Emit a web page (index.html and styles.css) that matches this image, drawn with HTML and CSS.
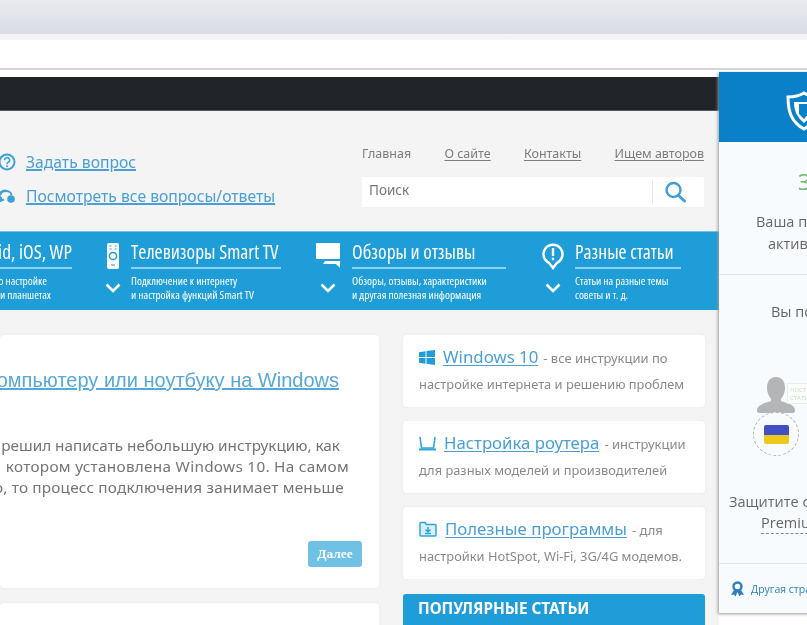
FILE: index.html
```html
<!DOCTYPE html>
<html lang="ru">
<head>
<meta charset="utf-8">
<title>Настройка</title>
<link rel="stylesheet" href="styles.css">
</head>
<body>
<div class="screen">
  <div class="browser-tabs"></div>
  <div class="browser-address"></div>
  <div class="page">
    <div class="darkbar"></div>
    <header class="site-head">
      <div class="ask">
        <a class="ask-row" href="#">
          <svg class="ask-icon" viewBox="0 0 18 18"><circle cx="9" cy="9" r="7.5" fill="none" stroke="#3f9fd6" stroke-width="2"/><path d="M6.6 7.2a2.5 2.5 0 1 1 3.6 2.2c-.8.4-1.2.9-1.2 1.8" fill="none" stroke="#3f9fd6" stroke-width="1.6"/><circle cx="9" cy="13.3" r="1" fill="#3f9fd6"/></svg>
          <span>Задать вопрос</span>
        </a>
        <a class="ask-row" href="#">
          <svg class="ask-icon" viewBox="0 0 18 18"><path d="M8 3.5c-3.6 0-6.5 2-6.5 4.6 0 1.3.7 2.4 1.8 3.2L2.5 14l3.6-1.6" fill="none" stroke="#3f9fd6" stroke-width="1.8"/><path d="M2.500 8a5.500 4 0 0 1 11 0" fill="none" stroke="#3f9fd6" stroke-width="1.8"/><circle cx="13" cy="12" r="3.800" fill="#3f9fd6"/></svg>
          <span>Посмотреть все вопросы/ответы</span>
        </a>
      </div>
      <div class="head-right">
        <nav class="top-links">
          <span class="top-plain">Главная</span>
          <a href="#">О сайте</a>
          <a href="#">Контакты</a>
          <a href="#">Ищем авторов</a>
        </nav>
        <div class="search">
          <span class="search-text">Поиск</span>
          <span class="search-btn">
            <svg width="24" height="24" viewBox="0 0 24 24"><circle cx="10.500" cy="10" r="7" fill="none" stroke="#3f9fd6" stroke-width="2.400"/><path d="M15.500 15.500l6 5.500" stroke="#3f9fd6" stroke-width="3" stroke-linecap="round"/></svg>
          </span>
        </div>
      </div>
    </header>

    <nav class="cats">
      <div class="cat cat-a">
        <div class="cat-text">
          <div class="cat-title">Android, iOS, WP</div>
          <div class="cat-sub"><span class="a1">Инструкции по настройке</span><span class="a2">смартфонов и планшетах</span></div>
        </div>
      </div>
      <div class="cat cat-b">
        <div class="cat-icon">
          <svg class="glyph" width="16" height="28" viewBox="0 0 16 28"><rect x="2" y="1" width="12" height="26" rx="2" fill="#fff"/><circle cx="8" cy="14" r="3.600" fill="none" stroke="#1f9dd9" stroke-width="1.500"/><path d="M4.500 4h2M9.500 4h2M4.500 7h2M9.500 7h2M6 23h4" stroke="#1f9dd9" stroke-width="1.200"/></svg>
          <svg class="chev" width="16" height="10" viewBox="0 0 16 10"><path d="M1.500 1.500L8 8l6.500-6.500" fill="none" stroke="#fff" stroke-width="2.600"/></svg>
        </div>
        <div class="cat-text">
          <div class="cat-title">Телевизоры Smart TV</div>
          <div class="cat-sub"><span>Подключение к интернету</span><span>и настройка функций Smart TV</span></div>
        </div>
      </div>
      <div class="cat cat-c">
        <div class="cat-icon">
          <svg class="glyph" width="26" height="28" viewBox="0 0 26 28"><path d="M2 1h22a1 1 0 0 1 1 1v14a1 1 0 0 1-1 1H2a1 1 0 0 1-1-1V2a1 1 0 0 1 1-1z" fill="#fff"/><path d="M10 19h15v7l-4-4H8z" fill="#fff"/></svg>
          <svg class="chev" width="16" height="10" viewBox="0 0 16 10"><path d="M1.500 1.500L8 8l6.500-6.500" fill="none" stroke="#fff" stroke-width="2.600"/></svg>
        </div>
        <div class="cat-text">
          <div class="cat-title">Обзоры и отзывы</div>
          <div class="cat-sub"><span>Обзоры, отзывы, характеристики</span><span>и другая полезная информация</span></div>
        </div>
      </div>
      <div class="cat cat-d">
        <div class="cat-icon">
          <svg class="glyph" width="22" height="28" viewBox="0 0 22 28"><path d="M11 26l-4-5.200A9.500 9.500 0 1 1 15 20.800z" fill="none" stroke="#fff" stroke-width="2.400"/><path d="M11 6v8" stroke="#fff" stroke-width="2.400"/><circle cx="11" cy="17" r="1.400" fill="#fff"/></svg>
          <svg class="chev" width="16" height="10" viewBox="0 0 16 10"><path d="M1.500 1.500L8 8l6.500-6.500" fill="none" stroke="#fff" stroke-width="2.600"/></svg>
        </div>
        <div class="cat-text">
          <div class="cat-title">Разные статьи</div>
          <div class="cat-sub"><span>Статьи на разные темы</span><span>советы и т. д.</span></div>
        </div>
      </div>
    </nav>

    <main class="main">
      <div class="col-left">
        <article class="post">
          <h2 class="post-title"><a href="#">Как подключить интернет к компьютеру или ноутбуку на Windows</a></h2>
          <div class="post-text">
            <div class="pl pl1">Давно решил написать небольшую инструкцию, как</div>
            <div class="pl pl2">на котором установлена Windows 10. На самом</div>
            <div class="pl pl3">Если просто, то процесс подключения занимает меньше</div>
          </div>
          <a class="more" href="#">Далее</a>
        </article>
        <article class="post post-next"></article>
      </div>
      <aside class="col-right">
        <div class="tip">
          <div class="tip-first">
            <svg class="tip-icon" width="16" height="15" viewBox="0 0 16 15"><path d="M0 2.200L6.500 1.200V7H0zM7.500 1L16 0v7H7.500zM0 8h6.500v5.800L0 12.800zM7.500 8H16v7l-8.500-1.200z" fill="#1f9dd9"/></svg>
            <a href="#">Windows 10</a> <span class="tip-rest">- все инструкции по</span>
          </div>
          <div class="tip-second">настройке интернета и решению проблем</div>
        </div>
        <div class="tip">
          <div class="tip-first">
            <svg class="tip-icon" width="17" height="15" viewBox="0 0 17 15"><path d="M1 1l1.500 11h12L16 1" fill="none" stroke="#2fa5dd" stroke-width="1.600"/><path d="M0 13.500h17" stroke="#2fa5dd" stroke-width="2"/></svg>
            <a href="#">Настройка роутера</a> <span class="tip-rest">- инструкции</span>
          </div>
          <div class="tip-second">для разных моделей и производителей</div>
        </div>
        <div class="tip">
          <div class="tip-first">
            <svg class="tip-icon" width="18" height="16" viewBox="0 0 18 16"><path d="M1 4V2.500a1 1 0 0 1 1-1h4l1.500 2H16a1 1 0 0 1 1 1V14a1 1 0 0 1-1 1H2a1 1 0 0 1-1-1z" fill="#d9f0fa" stroke="#2fa5dd" stroke-width="1.500"/><path d="M9 6v4M6.500 8.500L9 11l2.500-2.500M6 12.500h6" fill="none" stroke="#2fa5dd" stroke-width="1.500"/></svg>
            <a href="#">Полезные программы</a> <span class="tip-rest">- для</span>
          </div>
          <div class="tip-second">настройки HotSpot, Wi-Fi, 3G/4G модемов.</div>
        </div>
        <div class="popular">ПОПУЛЯРНЫЕ СТАТЬИ</div>
      </aside>
    </main>
  </div>

  <section class="vpn">
    <div class="vpn-head">
      <svg class="vpn-logo" width="36" height="40" viewBox="0 0 36 40"><path d="M18 2c5 3 10 4 16 4 0 14-3 25-16 32C5 31 2 20 2 6c6 0 11-1 16-4z" fill="none" stroke="#fff" stroke-width="3"/><path d="M8 11h20c0 9-3 15-10 21-7-6-10-12-10-21z" fill="#fff"/><path d="M13 13h9v10l-4 5-5-5z" fill="#0a80c8"/></svg>
    </div>
    <div class="vpn-status">
      <div class="vpn-green">Защита</div>
      <div class="vpn-line v-your">Ваша программа</div>
      <div class="vpn-line v-active">активна</div>
    </div>
    <div class="vpn-body">
      <div class="vpn-line v-you">Вы под защитой</div>
      <div class="vpn-map">
        <svg class="vpn-person" width="40" height="38" viewBox="0 0 40 38"><path d="M20 1c-6.500 0-9 5-9 11 0 5 2 8.500 4 10.500v2.500c-5 2-14 3-14 9.500 0 2 1 2.500 3 2.500h32c2 0 3-.5 3-2.500 0-6.500-9-7.500-14-9.500v-2.500c2-2 4-5.500 4-10.500 0-6-2.500-11-9-11z" fill="#b3b5b6"/></svg>
        <div class="vpn-tag">НОСТ<br>СТАТУ</div>
        <div class="vpn-flag-ring"><div class="vpn-flag"></div></div>
      </div>
      <div class="vpn-line v-protect">Защитите свой браузер</div>
      <div class="vpn-line v-premium"><span>Premium</span></div>
    </div>
    <div class="vpn-foot">
      <svg width="15" height="16" viewBox="0 0 15 16"><circle cx="7.500" cy="5.500" r="4" fill="none" stroke="#2d7fc0" stroke-width="2.400"/><path d="M4 9l-3 5 3-.5 1.500 2L7.500 11l2 4.500 1.500-2 3 .5-3-5" fill="#2d7fc0"/></svg>
      <span>Другая страница</span>
    </div>
  </section>
</div>
</body>
</html>
```
FILE: styles.css
```css
* { box-sizing: border-box; }
html, body { margin: 0; padding: 0; height: 100%; overflow: hidden; background: #fff; }
a { color: inherit; }
.screen {
  position: relative;
  width: 807px;
  height: 625px;
  overflow: hidden;
  background: #fff;
  filter: blur(0.45px);
  font-family: "Open Sans", "Noto Sans", sans-serif;
}
.browser-tabs { height: 34px; background: linear-gradient(#e9ebf0, #d9dce3); }
.browser-address {
  height: 36px;
  margin-bottom: 7px;
  padding: 0;
  background: #fff;
  border-top: 6px solid #f3f4f6;
  border-bottom: 2px solid #d4d5d8;
}
.page { width: 719px; background: #f4f4f4; height: 548px; overflow: hidden; }
.darkbar { height: 34px; background: #212529; border-bottom: 1px solid #55585b; }

.site-head {
  height: 120px;
  display: flex;
  justify-content: space-between;
  padding: 34px 15px 0 0;
}
.ask { display: flex; flex-direction: column; gap: 14px; padding-top: 7px; margin-left: -2px; }
.ask-row {
  display: flex;
  align-items: center;
  gap: 10px;
  height: 20px;
  color: #4a9fd4;
  font-family: "Noto Sans", sans-serif;
  font-size: 15.700px;
  white-space: nowrap;
}
.ask-row span { text-decoration: underline; text-underline-offset: 2px; }
.ask-icon { width: 18px; height: 18px; flex: none; }
.head-right { width: 342px; }
.top-links {
  display: flex;
  justify-content: space-between;
  height: 20px;
  margin-bottom: 12px;
  color: #7d7d7d;
  font-family: "Noto Sans", sans-serif;
  font-size: 12.500px;
  line-height: 18px;
}
.top-links a { text-underline-offset: 2px; }
.search {
  height: 30px;
  display: flex;
  align-items: center;
  justify-content: space-between;
  background: #fff;
  padding-left: 7px;
}
.search-text { color: #777; font-size: 13.500px; font-family: "Noto Sans", sans-serif; padding-bottom: 4px; }
.search-btn {
  width: 52px;
  height: 24px;
  border-left: 1px solid #e8e8e8;
  display: flex;
  align-items: center;
  padding-left: 10px;
}

.cats {
  height: 79px;
  display: flex;
  background: #1f9dd9;
  border-top: 1px solid #6fc1e6;
  padding-top: 8px;
  color: #fff;
}
.cat { display: flex; flex: none; }
.cat-a { margin-left: -78px; margin-right: 29px; }
.cat-a .cat-text { width: 150px; text-align: right; }
.a1, .a2 { display: block; }
.cat-a .a1 { padding-right: 25px; }
.cat-a .a2 { padding-right: 21px; }
.cat-b { gap: 6px; margin-right: 35px; }
.cat-b .cat-text { width: 150px; }
.cat-c { gap: 12px; margin-right: 35px; }
.cat-c .cat-text { width: 154px; }
.cat-d { gap: 10px; }
.cat-d .cat-text { width: 106px; }
.cat-icon {
  width: 24px;
  display: flex;
  flex-direction: column;
  align-items: center;
}
.glyph { height: 28px; margin-bottom: 13px; margin-top: 2px; flex: none; }
.cat-title {
  height: 29px;
  border-bottom: 2px solid #8fd0ee;
  font-family: "Open Sans", sans-serif;
  font-stretch: 75%;
  font-size: 19.500px;
  line-height: 23px;
  white-space: nowrap;
}
.cat-sub {
  padding-top: 5px;
  font-family: "Open Sans", sans-serif;
  font-stretch: 87%;
  font-size: 11.300px;
  line-height: 14px;
  white-space: nowrap;
}
.cat-sub span { display: block; }

.main { display: flex; gap: 24px; padding-top: 25px; }
.col-left { width: 379px; flex: none; display: flex; flex-direction: column; gap: 15px; }
.post {
  height: 253px;
  background: #fff;
  border-radius: 4px;
  box-shadow: 0 0 2px #e6e6e6;
  padding: 33px 17px 21px 0;
  display: flex;
  flex-direction: column;
  align-items: flex-end;
}
.post-next { height: 60px; padding: 0; }
.post-title {
  margin: 0 23px 0 0;
  width: 600px;
  font-family: "Liberation Sans", Arial, sans-serif;
  font-weight: 400;
  font-size: 20px;
  line-height: 24px;
  color: #57a8da;
  white-space: nowrap;
  display: flex;
  justify-content: flex-end;
}
.post-text { margin-top: 43px; width: 362px; font-family: "Noto Sans", sans-serif; font-size: 15.300px; line-height: 21px; color: #747474; }
.pl { display: flex; justify-content: flex-end; white-space: nowrap; }
.pl1 { padding-right: 22px; }
.pl2 { padding-right: 13px; letter-spacing: 0.3px; }
.pl3 { padding-right: 18px; letter-spacing: 0.2px; }
.more {
  margin-top: 43px;
  width: 54px;
  height: 26px;
  flex: none;
  background: #6fc1e6;
  border-radius: 3px;
  color: #fff;
  text-align: center;
  text-decoration: none;
  font-family: "Liberation Serif", serif;
  font-weight: 700;
  font-size: 13.500px;
  line-height: 25px;
}

.col-right { width: 302px; flex: none; display: flex; flex-direction: column; gap: 14px; }
.tip {
  height: 72px;
  background: #fff;
  border-radius: 4px;
  box-shadow: 0 0 2px #e6e6e6;
  padding: 10px 0 0 16px;
  white-space: nowrap;
}
.tip-first { display: flex; align-items: baseline; height: 24px; color: #4a9fd4; font-family: "Noto Sans", sans-serif; font-size: 16.800px; }
.tip-first a { text-underline-offset: 2px; }
.tip-icon { flex: none; margin-right: 8px; align-self: center; }
.tip-rest { margin-left: 5px; color: #8a8a8a; font-size: 13px; padding-top: 1px; }
.tip-second { margin-top: 5px; color: #8a8a8a; font-family: "Noto Sans", sans-serif; font-size: 12.850px; line-height: 20px; }
.popular {
  height: 40px;
  margin-top: 1px;
  padding: 4px 0 0 15px;
  background: #1f9dd9;
  border-radius: 3px 3px 0 0;
  color: #fff;
  font-family: "Noto Sans", sans-serif;
  font-weight: 700;
  font-size: 15.300px;
  line-height: 20px;
}

.vpn {
  position: absolute;
  left: 719px;
  top: 72px;
  width: 252px;
  height: 541px;
  background: #f7fbfd;
  box-shadow: -1px 1px 3px #9a9a9a;
  color: #666;
  font-size: 14.500px;
  display: flex;
  flex-direction: column;
}
.vpn-head { height: 70px; flex: none; background: #0a80c8; padding-top: 19px; }
.vpn-logo { display: block; margin-left: 67px; }
.vpn-status { height: 133px; flex: none; padding-top: 24px; border-bottom: 1px solid #e3e6e8; }
.vpn-green { color: #6cb86c; font-size: 22px; line-height: 30px; margin-bottom: 15px; padding-left: 79px; white-space: nowrap; }
.vpn-line { line-height: 22px; white-space: nowrap; }
.v-your { padding-left: 37px; }
.v-active { padding-left: 49px; }
.v-you { padding-left: 52px; }
.v-protect { padding-left: 10px; margin-top: 26px; line-height: 21px; }
.v-premium { padding-left: 42px; line-height: 21px; }
.vpn-body { height: 289px; flex: none; padding-top: 26px; border-bottom: 1px solid #e3e6e8; }
.vpn-map { position: relative; height: 142px; }
.vpn-person { position: absolute; left: 37px; top: 53px; }
.vpn-tag {
  position: absolute;
  left: 68px;
  top: 60px;
  width: 40px;
  height: 21px;
  border: 1px solid #e8eee8;
  background: #fbfdfb;
  color: #c9dec9;
  font-size: 6px;
  line-height: 8px;
  padding: 2px 0 0 2px;
}
.vpn-flag-ring {
  position: absolute;
  left: 34px;
  top: 89px;
  width: 46px;
  height: 44px;
  border: 1px dashed #b4b7b8;
  border-radius: 50%;
  display: flex;
  align-items: center;
  justify-content: center;
  background: #f7fbfd;
}
.vpn-flag {
  width: 25px;
  height: 19px;
  border-radius: 2px;
  background: linear-gradient(#4150c4 0 50%, #ecc91d 50% 100%);
}
.v-premium span { border-bottom: 1px dashed #888; padding-bottom: 1px; }
.vpn-foot {
  height: 50px;
  display: flex;
  align-items: center;
  gap: 6px;
  padding: 0 0 0 11px;
  color: #2d7fc0;
  font-size: 10.500px;
  white-space: nowrap;
}
```
